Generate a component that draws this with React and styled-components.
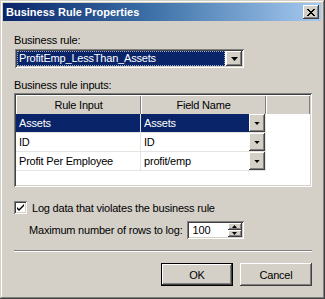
import React from "react";
import styled, { createGlobalStyle } from "styled-components";

const GlobalStyle = createGlobalStyle`
  html, body {
    margin: 0;
    padding: 0;
    background: #d4d0c8;
  }
  * {
    box-sizing: border-box;
  }
`;

const face = "#d4d0c8";
const navy = "#0a246a";

const Window = styled.div`
  width: 325px;
  height: 299px;
  background: ${face};
  padding: 3px 4px 4px 3px;
  box-shadow: inset -1px -1px 0 #404040, inset 1px 1px 0 ${face},
    inset -2px -2px 0 #808080, inset 2px 2px 0 #ffffff;
  font-family: "Liberation Sans", Arial, sans-serif;
  font-size: 11px;
  letter-spacing: -0.2px;
  color: #000;
  display: flex;
  flex-direction: column;
`;

const TitleBar = styled.div`
  height: 18px;
  background: linear-gradient(90deg, ${navy} 0%, #3a6ea5 45%, #a6caf0 100%);
  display: flex;
  align-items: center;
  justify-content: space-between;
  padding: 0 2px 0 3px;
`;

const Title = styled.span`
  color: #fff;
  font-weight: bold;
  font-size: 11px;
  letter-spacing: 0;
`;

const RaisedBox = styled.div`
  background: ${face};
  box-shadow: inset -1px -1px 0 #404040, inset 1px 1px 0 #ffffff,
    inset -2px -2px 0 #808080, inset 2px 2px 0 ${face};
  display: flex;
  align-items: center;
  justify-content: center;
`;

const CloseButton = styled(RaisedBox)`
  width: 16px;
  height: 14px;
`;

const Body = styled.div`
  flex: 1;
  display: flex;
  flex-direction: column;
  padding: 12px 9px 0 11px;
`;

const Label = styled.div`
  line-height: 14px;
  margin-top: ${(p) => p.$top || 0}px;
`;

const Sunken = styled.div`
  background: #fff;
  box-shadow: inset 1px 1px 0 #808080, inset -1px -1px 0 #ffffff,
    inset 2px 2px 0 #404040, inset -2px -2px 0 ${face};
  padding: 2px;
  display: flex;
`;

const Combo = styled(Sunken)`
  width: 229px;
  height: 19px;
  margin: 2px 0 0 1px;
`;

const ComboValue = styled.div`
  flex: 1;
  background: ${navy};
  color: #fff;
  line-height: 15px;
  padding-left: 2px;
  outline: 1px dotted #a0a8c8;
  outline-offset: -1px;
  margin-right: 1px;
`;

const DropButton = styled(RaisedBox)`
  width: 16px;
  flex: none;
`;

const Grid = styled(Sunken)`
  margin-top: 1px;
  height: 94px;
  width: 298px;
  flex-direction: column;
`;

const GridRows = styled.div`
  display: grid;
  grid-template-columns: 125px 125px 1fr;
  grid-auto-rows: 19px;
`;

const HeadCell = styled.div`
  background: ${face};
  height: 20px;
  display: flex;
  align-items: center;
  justify-content: center;
  box-shadow: inset 1px 1px 0 #ffffff, inset -1px -1px 0 #808080;
`;

const Cell = styled.div`
  display: flex;
  align-items: center;
  padding-left: 3px;
  background: ${(p) => (p.$sel ? navy : "#fff")};
  color: ${(p) => (p.$sel ? "#fff" : "#000")};
  border-bottom: 1px solid #e6e4de;
  border-right: 1px solid #e6e4de;
  white-space: nowrap;
`;

const FieldCell = styled.div`
  display: flex;
  border-bottom: 1px solid #e6e4de;
  border-right: 1px solid #e6e4de;
  background: #fff;
`;

const FieldText = styled.div`
  flex: 1;
  display: flex;
  align-items: center;
  padding-left: 3px;
  background: ${(p) => (p.$sel ? navy : "#fff")};
  color: ${(p) => (p.$sel ? "#fff" : "#000")};
`;

const Blank = styled.div`
  background: #fff;
`;

const CheckRow = styled.div`
  display: flex;
  align-items: center;
  gap: 5px;
  margin-top: 14px;
  height: 13px;
`;

const CheckBox = styled(Sunken)`
  width: 13px;
  height: 13px;
  padding: 0;
  align-items: center;
  justify-content: center;
`;

const SpinRow = styled.div`
  display: flex;
  align-items: center;
  gap: 4px;
  margin: 7px 0 0 15px;
`;

const Spin = styled(Sunken)`
  width: 57px;
  height: 18px;
`;

const SpinValue = styled.div`
  flex: 1;
  line-height: 14px;
  padding-left: 4px;
`;

const SpinButtons = styled.div`
  display: flex;
  flex-direction: column;
  width: 14px;
`;

const SpinHalf = styled(RaisedBox)`
  flex: 1;
`;

const Separator = styled.div`
  margin-top: 11px;
  height: 2px;
  width: 298px;
  border-top: 1px solid #808080;
  border-bottom: 1px solid #ffffff;
`;

const ButtonRow = styled.div`
  display: flex;
  justify-content: flex-end;
  gap: 7px;
  margin-top: 11px;
`;

const Button = styled(RaisedBox)`
  width: 72px;
  height: 23px;
  ${(p) =>
    p.$default &&
    `box-shadow: inset 0 0 0 1px #000, inset -2px -2px 0 #404040, inset 2px 2px 0 #ffffff,
    inset -3px -3px 0 #808080;`}
`;

const Arrow = ({ size = 7 }) => (
  <svg width={size} height={Math.ceil(size / 2)} viewBox="0 0 7 4">
    <path d="M0 0h7L3.5 4z" fill="#000" />
  </svg>
);

const rows = [
  { input: "Assets", field: "Assets", sel: true },
  { input: "ID", field: "ID" },
  { input: "Profit Per Employee", field: "profit/emp" },
];

export default function App() {
  return (
    <>
      <GlobalStyle />
      <Window>
        <TitleBar>
          <Title>Business Rule Properties</Title>
          <CloseButton>
            <svg width="8" height="7" viewBox="0 0 8 7">
              <path d="M0 0l7 7M1 0l7 7M7 0L0 7M8 0L1 7" stroke="#000" strokeWidth="1" />
            </svg>
          </CloseButton>
        </TitleBar>
        <Body>
          <Label>Business rule:</Label>
          <Combo>
            <ComboValue>ProfitEmp_LessThan_Assets</ComboValue>
            <DropButton>
              <Arrow />
            </DropButton>
          </Combo>
          <Label $top={10}>Business rule inputs:</Label>
          <Grid>
            <GridRows>
              <HeadCell>Rule Input</HeadCell>
              <HeadCell>Field Name</HeadCell>
              <HeadCell />
              {rows.map((r) => (
                <React.Fragment key={r.input}>
                  <Cell $sel={r.sel}>{r.input}</Cell>
                  <FieldCell>
                    <FieldText $sel={r.sel}>{r.field}</FieldText>
                    <DropButton>
                      <Arrow size={6} />
                    </DropButton>
                  </FieldCell>
                  <Blank />
                </React.Fragment>
              ))}
            </GridRows>
          </Grid>
          <CheckRow>
            <CheckBox>
              <svg width="9" height="9" viewBox="0 0 9 9">
                <path d="M1 4l2 2 5-5v2L3 8 1 6z" fill="#000" />
              </svg>
            </CheckBox>
            <span>Log data that violates the business rule</span>
          </CheckRow>
          <SpinRow>
            <span>Maximum number of rows to log:</span>
            <Spin>
              <SpinValue>100</SpinValue>
              <SpinButtons>
                <SpinHalf>
                  <svg width="5" height="3" viewBox="0 0 5 3">
                    <path d="M0 3h5L2.5 0z" fill="#000" />
                  </svg>
                </SpinHalf>
                <SpinHalf>
                  <svg width="5" height="3" viewBox="0 0 5 3">
                    <path d="M0 0h5L2.5 3z" fill="#000" />
                  </svg>
                </SpinHalf>
              </SpinButtons>
            </Spin>
          </SpinRow>
          <Separator />
          <ButtonRow>
            <Button $default>OK</Button>
            <Button>Cancel</Button>
          </ButtonRow>
        </Body>
      </Window>
    </>
  );
}
